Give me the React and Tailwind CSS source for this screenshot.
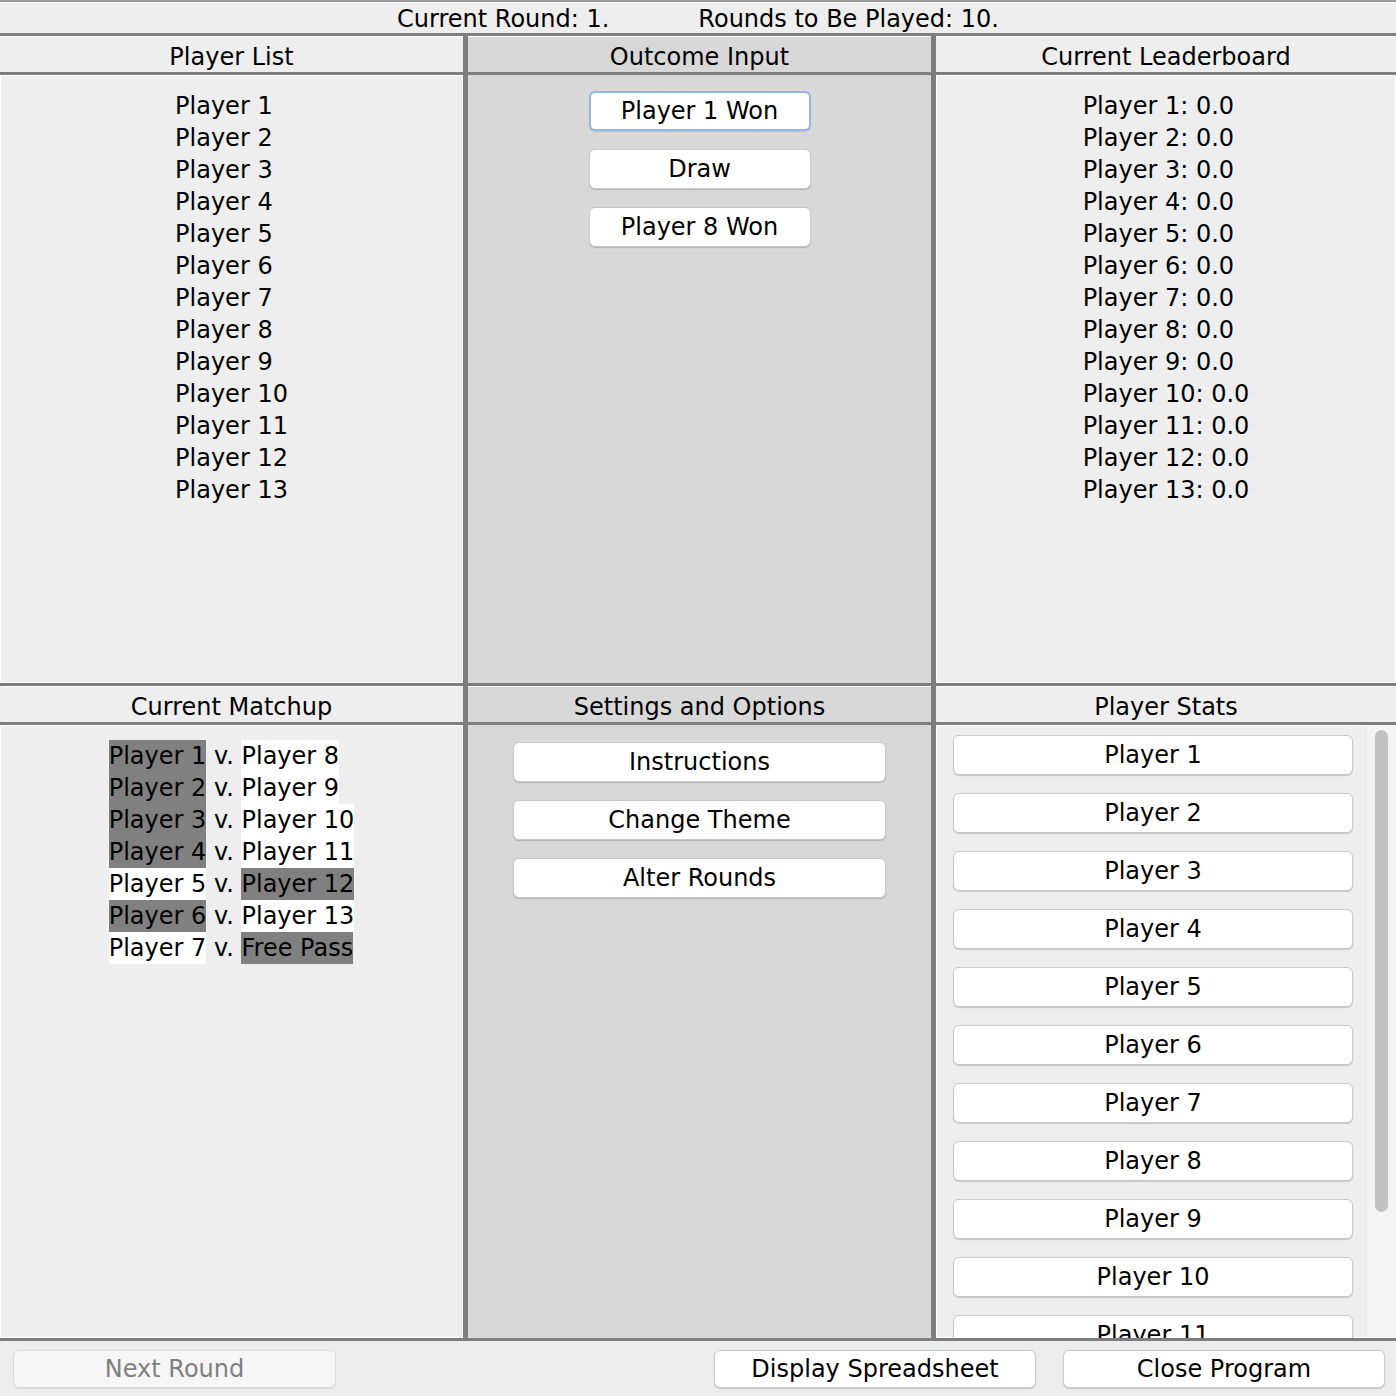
import React from "react";

const PLAYERS = Array.from({ length: 13 }, (_, i) => `Player ${i + 1}`);

// [left, leftMarked, right, rightMarked]
const MATCHUPS = [
  ["Player 1", true, "Player 8", false],
  ["Player 2", true, "Player 9", false],
  ["Player 3", true, "Player 10", false],
  ["Player 4", true, "Player 11", false],
  ["Player 5", false, "Player 12", true],
  ["Player 6", true, "Player 13", false],
  ["Player 7", false, "Free Pass", true],
];

function Btn({ children, className = "", focused = false, disabled = false }) {
  const base = "flex items-center justify-center rounded-[6px] leading-none";
  const look = disabled
    ? "bg-[#f6f6f6] border border-[#dadada] text-[#7f7f7f] shadow-[0_1px_0_rgba(0,0,0,0.08)]"
    : focused
    ? "bg-white border-2 border-[#93b5ea] text-black shadow-[0_1px_1px_rgba(0,0,0,0.12)]"
    : "bg-white border border-[#c9c9c9] text-black shadow-[0_1px_1px_rgba(0,0,0,0.18)]";
  return <div className={`${base} ${look} ${className}`}>{children}</div>;
}

function Header({ children }) {
  return (
    <div className="h-[39px] shrink-0 pt-[7px] leading-[28px] text-center border-b-[3px] border-[#7e7e7e] shadow-[inset_0_1px_0_#fff]">
      {children}
    </div>
  );
}

function Panel({ title, dark = false, children }) {
  return (
    <div className={`flex flex-col min-h-0 overflow-hidden ${dark ? "bg-[#d8d8d8]" : "bg-[#eeeeee]"}`}>
      <Header>{title}</Header>
      <div className={`flex-1 min-h-0 ${dark ? "" : "shadow-[inset_1px_1px_0_#fff,inset_-1px_-1px_0_#fff]"}`}>{children}</div>
    </div>
  );
}

export default function App() {
  return (
    <div className="w-[1396px] h-[1396px] flex flex-col bg-[#eeeeee] text-black text-[24px] font-['DejaVu_Sans','Noto_Sans',sans-serif] overflow-hidden">
      {/* round info */}
      <div className="h-[36px] shrink-0 border-t-2 border-b-[3px] border-t-[#9a9a9a] border-b-[#7e7e7e] shadow-[inset_0_1px_0_#fff] pt-[3px] leading-[28px] flex justify-center gap-[89px]">
        <span>Current Round: 1.</span>
        <span>Rounds to Be Played: 10.</span>
      </div>

      <div className="grid grid-cols-[463px_463px_460px] grid-rows-[647px_652px] gap-x-[5px] gap-y-[3px] bg-[#7e7e7e] border-b-[3px] border-[#7e7e7e] shrink-0">
        <Panel title="Player List">
          <div className="flex justify-center pt-[15px] leading-[32px]">
            <div>
              {PLAYERS.map((p) => (
                <div key={p}>{p}</div>
              ))}
            </div>
          </div>
        </Panel>

        <Panel title="Outcome Input" dark>
          <div className="flex flex-col items-center gap-[18px] pt-[16px]">
            <Btn focused className="w-[222px] h-[40px]">Player 1 Won</Btn>
            <Btn className="w-[222px] h-[40px]">Draw</Btn>
            <Btn className="w-[222px] h-[40px]">Player 8 Won</Btn>
          </div>
        </Panel>

        <Panel title="Current Leaderboard">
          <div className="flex justify-center pt-[15px] leading-[32px]">
            <div>
              {PLAYERS.map((p) => (
                <div key={p}>{p}: 0.0</div>
              ))}
            </div>
          </div>
        </Panel>

        <Panel title="Current Matchup">
          <div className="flex justify-center pt-[15px]">
            <div>
              {MATCHUPS.map(([a, am, b, bm]) => (
                <div key={a} className="h-[32px] leading-[32px] whitespace-pre">
                  <span className={`inline-block h-[32px] ${am ? "bg-[#808080]" : "bg-white"}`}>{a}</span>
                  {" v. "}
                  <span className={`inline-block h-[32px] ${bm ? "bg-[#808080]" : "bg-white"}`}>{b}</span>
                </div>
              ))}
            </div>
          </div>
        </Panel>

        <Panel title="Settings and Options" dark>
          <div className="flex flex-col items-center gap-[18px] pt-[17px]">
            <Btn className="w-[373px] h-[40px]">Instructions</Btn>
            <Btn className="w-[373px] h-[40px]">Change Theme</Btn>
            <Btn className="w-[373px] h-[40px]">Alter Rounds</Btn>
          </div>
        </Panel>

        <Panel title="Player Stats">
          <div className="flex h-full overflow-hidden">
            <div className="flex-1 flex flex-col gap-[18px] pt-[10px] pl-[17px] overflow-hidden">
              {PLAYERS.map((p) => (
                <Btn key={p} className="w-[400px] h-[40px] shrink-0">{p}</Btn>
              ))}
            </div>
            <div className="w-[30px] shrink-0 bg-[#f4f4f4] border-l border-[#e6e6e6] pl-[8px] pt-[5px]">
              <div className="w-[13px] h-[482px] rounded-full bg-[#c2c2c2]" />
            </div>
          </div>
        </Panel>
      </div>

      {/* actions */}
      <div className="flex-1 flex items-start pt-[9px] pl-[13px] pr-[11px] bg-[#ececec]">
        <Btn disabled className="w-[323px] h-[38px]">Next Round</Btn>
        <div className="flex-1" />
        <Btn className="w-[322px] h-[38px]">Display Spreadsheet</Btn>
        <Btn className="w-[322px] h-[38px] ml-[27px]">Close Program</Btn>
      </div>
    </div>
  );
}
